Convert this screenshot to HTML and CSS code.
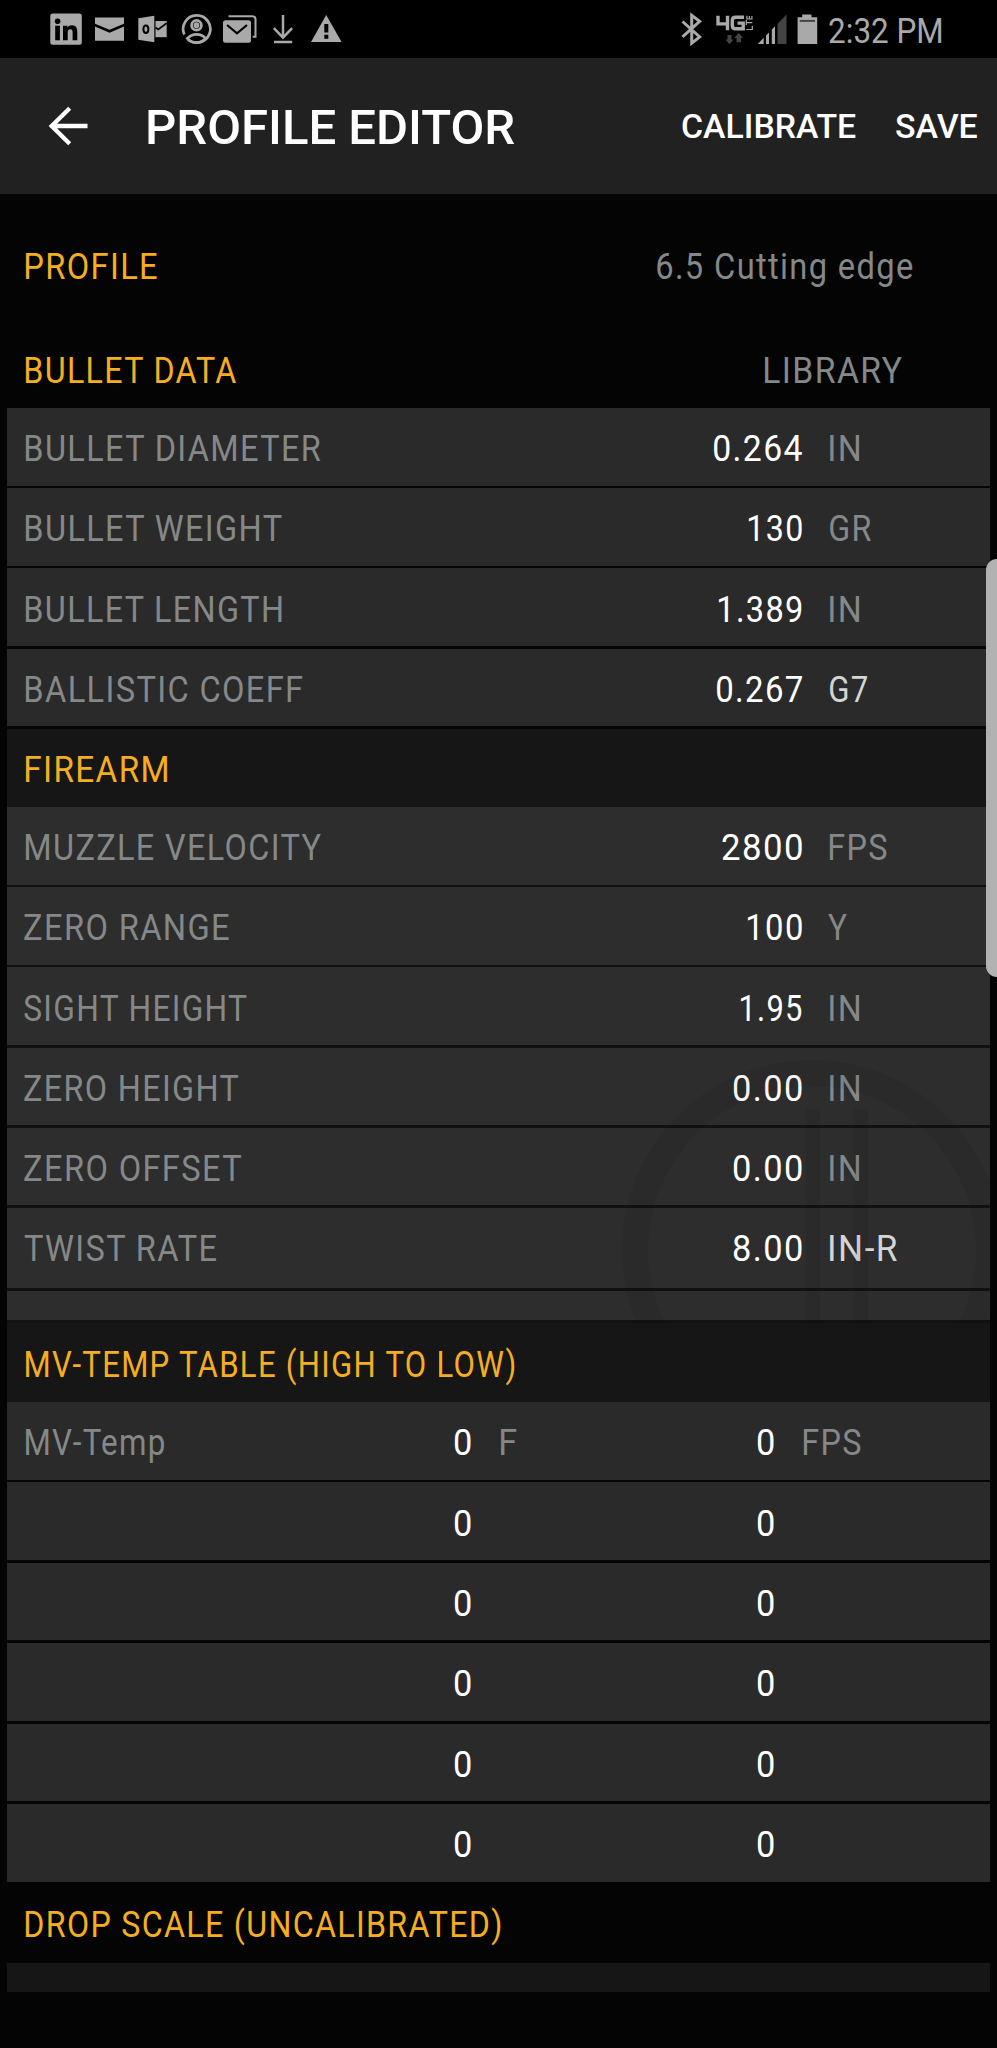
FILE: index.html
```html
<!DOCTYPE html>
<html lang="en">
<head>
<meta charset="utf-8">
<title>Profile Editor</title>
<link rel="stylesheet" href="styles.css">
</head>
<body>
<div class="statusbar">
  <div class="status-left">
    <svg class="ic" width="32" height="58" viewBox="50 0 32 58"><rect x="50.3" y="13.6" width="31.5" height="31.2" rx="2.5" fill="#a9a9a9"/><g fill="#000"><circle cx="57.6" cy="21.3" r="2.8"/><rect x="55.2" y="25.7" width="4.7" height="14.6"/><path d="M63 25.7h4.4v2c1-1.6 2.700-2.400 4.500-2.400 4.300 0 5.400 2.900 5.400 6.800v8.200h-4.700v-7.300c0-2-.2-3.700-2.300-3.700s-2.600 1.600-2.600 3.600v7.400H63z"/></g></svg>
    <svg class="ic g13" width="29" height="58" viewBox="95 0 29 58"><path d="M95 17.600h29v6.100l-14.500 6-14.500-6zM95 26.600l14.500 6.100 14.500-6.100V40.800H95z" fill="#a9a9a9"/></svg>
    <svg class="ic g14" width="29" height="58" viewBox="138 0 29 58"><path d="M138.300 18.300l16-2.500v26.400l-16-2.500z" fill="#a9a9a9"/><ellipse cx="145.900" cy="29.200" rx="2.500" ry="3.800" fill="none" stroke="#000" stroke-width="2"/><path d="M155.500 21h11.200v16.200h-11.200z" fill="#a9a9a9"/><path d="M155.500 27.500l2.700 2 8.500-6.300" fill="none" stroke="#000" stroke-width="1.700"/></svg>
    <svg class="ic g14" width="31" height="58" viewBox="181 0 31 58" fill="none" stroke="#a9a9a9" stroke-width="2.700"><path d="M184.300 34.500A13.600 13.600 0 1 1 187.500 39"/><circle cx="196.500" cy="25.300" r="4.900"/><circle cx="196.500" cy="25.300" r="1.600"/><path d="M187.300 38.500c3-3.500 6-4.200 9.200-4.200s6.500.7 9.300 4.200c-2.500 2.600-5.600 4.100-9.300 4.100s-7-1.500-9.200-4.100z"/></svg>
    <svg class="ic g11" width="34" height="58" viewBox="223 0 34 58"><path d="M228.500 16.300h24q3 0 3 3v17.500h-2.800" fill="none" stroke="#a9a9a9" stroke-width="2"/><rect x="223" y="20.300" width="28" height="22.500" rx="2.500" fill="#a9a9a9"/><path d="M227 25l10 8.300 10-8.300" fill="none" stroke="#000" stroke-width="2.200"/></svg>
    <svg class="ic g16" width="20" height="58" viewBox="273 0 20 58" fill="none" stroke="#a9a9a9" stroke-width="2.500"><path d="M283 15v22M273.900 28.200l9.100 9.400 9.100-9.400M274 42h18.200"/></svg>
    <svg class="ic g18" width="31" height="58" viewBox="311 0 31 58"><path d="M326.200 15L341.600 42H311z" fill="#a9a9a9"/><path d="M326.300 24v8.500M326.300 34.800v3.900" stroke="#000" stroke-width="4"/></svg>
  </div>
  <div class="status-right">
    <svg class="ic" width="21" height="58" viewBox="681 0 21 58"><path d="M682.500 21.500l17.200 15.400-8 6.200V15.200l8 6.200-17.200 15.400" fill="none" stroke="#a9a9a9" stroke-width="3"/></svg>
    <svg class="ic g14" width="37" height="58" viewBox="716 0 37 58"><path d="M718 15.800v8.100h11M727.500 15.800v14.500M744 17.200h-8.500q-3.200 0-3.200 3.200v5q0 3.300 3.200 3.300h7.700v-5.600h-5.700" fill="none" stroke="#a9a9a9" stroke-width="3.400"/><g fill="none" stroke="#a9a9a9" stroke-width="1.200"><path d="M746.300 29.500h6v-3.800M746.300 22.700h6M746.300 20v5M746.900 17.600V15.800M746.900 16v3h5V16M749.400 16v2.500"/></g><path d="M727.500 35h4v4.500h2l-4 4.800-4-4.800h2zM736.500 42.300h4.500V38h2.200l-4.500-5-4.500 5h2.300z" fill="#444"/></svg>
    <svg class="ic g5" width="29" height="58" viewBox="758 0 29 58"><path d="M786.500 14.500V44h-9V24z" fill="#444"/><path d="M757.700 44l6-6.200V44zM766 35.500l3-3V44h-3zM771.800 29.500l3.200-3.300V44h-3.200z" fill="#a9a9a9"/></svg>
    <svg class="ic g10" width="21" height="58" viewBox="797 0 21 58"><path d="M797.600 17.300h4.600V14.600h9.300v2.700h5.700V44h-19.600z" fill="#a9a9a9"/><path d="M799.700 20.900h15.300" stroke="#444" stroke-width="2"/></svg>
    <span class="t clock" data-w="113">2:32 PM</span>
  </div>
</div>
<header class="appbar">
  <svg class="back" width="40" height="40" viewBox="48 106 40 40" fill="none" stroke="#fff" stroke-width="4.300"><path d="M87.500 126H52M69.700 108.300L51.700 126l18 17.700"/></svg>
  <span class="t title" data-w="367">PROFILE EDITOR</span>
  <span class="t action" data-w="174">CALIBRATE</span>
  <span class="t action save" data-w="81.5">SAVE</span>
</header>
<main class="sheet">
  <div class="profile"><span class="t gold" data-w="131">PROFILE</span><span class="t grey name" data-w="256">6.5 Cutting edge</span></div>
  <div class="library"><span class="t gold" data-w="211">BULLET DATA</span><span class="t grey" data-w="137">LIBRARY</span></div>
  <section class="group">
    <div class="row"><span class="t grey" data-w="295">BULLET DIAMETER</span><span class="t val" data-w="88">0.264</span><span class="t grey" data-w="29">IN</span></div>
    <div class="row"><span class="t grey" data-w="256">BULLET WEIGHT</span><span class="t val" data-w="53">130</span><span class="t grey" data-w="41">GR</span></div>
    <div class="row"><span class="t grey" data-w="256">BULLET LENGTH</span><span class="t val" data-w="83">1.389</span><span class="t grey" data-w="29">IN</span></div>
    <div class="row"><span class="t grey" data-w="277">BALLISTIC COEFF</span><span class="t val" data-w="85">0.267</span><span class="t light" data-w="37">G7</span></div>
    <div class="row head"><span class="t gold" data-w="141">FIREARM</span></div>
  </section>
  <section class="group firearm">
    <svg class="mark" width="368" height="264" viewBox="622 1058 368 264" fill="none" stroke="#000"><circle cx="812" cy="1248" r="177" stroke-width="26"/><path d="M813 1107v215M861 1107v215" stroke-width="14"/></svg>
    <div class="row"><span class="t grey" data-w="295">MUZZLE VELOCITY</span><span class="t val" data-w="80">2800</span><span class="t grey" data-w="57">FPS</span></div>
    <div class="row"><span class="t grey out" data-w="205">ZERO RANGE</span><span class="t val" data-w="54">100</span><span class="t grey out" data-w="19">Y</span></div>
    <div class="row"><span class="t grey out" data-w="223">SIGHT HEIGHT</span><span class="t val" data-w="61">1.95</span><span class="t grey" data-w="29">IN</span></div>
    <div class="row"><span class="t grey out" data-w="214">ZERO HEIGHT</span><span class="t val" data-w="68">0.00</span><span class="t grey" data-w="29">IN</span></div>
    <div class="row"><span class="t grey out" data-w="217">ZERO OFFSET</span><span class="t val" data-w="68">0.00</span><span class="t grey" data-w="29">IN</span></div>
    <div class="row twist"><span class="t grey out" data-w="193">TWIST RATE</span><span class="t val" data-w="68">8.00</span><span class="t light" data-w="67">IN-R</span></div>
    <div class="strip"></div>
    <div class="row head"><span class="t gold" data-w="490">MV-TEMP TABLE (HIGH TO LOW)</span></div>
  </section>
  <section class="group temps">
    <div class="row"><span class="t grey" data-w="138">MV-Temp</span><span class="t val" data-w="16">0</span><span class="t grey" data-w="16">F</span><span class="t val" data-w="16">0</span><span class="t grey" data-w="57">FPS</span></div>
    <div class="row"><i></i><span class="t val" data-w="16">0</span><i></i><span class="t val" data-w="16">0</span></div>
    <div class="row"><i></i><span class="t val" data-w="16">0</span><i></i><span class="t val" data-w="16">0</span></div>
    <div class="row"><i></i><span class="t val" data-w="16">0</span><i></i><span class="t val" data-w="16">0</span></div>
    <div class="row"><i></i><span class="t val" data-w="16">0</span><i></i><span class="t val" data-w="16">0</span></div>
    <div class="row"><i></i><span class="t val" data-w="16">0</span><i></i><span class="t val" data-w="16">0</span></div>
  </section>
  <div class="drop"><span class="t gold" data-w="475">DROP SCALE (UNCALIBRATED)</span></div>
  <div class="tail"></div>
</main>
<div class="thumb"></div>
<script src="fit.js"></script>
</body>
</html>
```
FILE: styles.css
```css
* { box-sizing: border-box; }
body {
  position: relative;
  margin: 0;
  width: 997px;
  height: 2048px;
  overflow: hidden;
  background: #040404;
  color: #fff;
  font: 400 36.5px/44px Roboto, sans-serif;
  letter-spacing: 1.5px;
}
svg { display: block; flex: none; }
.t { display: block; white-space: pre; flex: none; }
.t b { display: inline-block; font-weight: inherit; transform-origin: 0 50%; }
.gold { color: #f5ae20; }
.grey { color: #858888; }
.light { color: #d4d4d4; }
.val { color: #fff; justify-self: end; }

.statusbar { display: flex; justify-content: space-between; height: 58px; padding: 0 55px 0 50px; background: #000; }
.status-left, .status-right { display: flex; }
.g5 { margin-left: 5px; }
.g10 { margin-left: 10px; }
.g11 { margin-left: 11px; }
.g13 { margin-left: 13px; }
.g14 { margin-left: 14px; }
.g16 { margin-left: 16px; }
.g18 { margin-left: 18px; }
.clock { margin-left: 11px; padding-top: 9px; font-size: 35.5px; letter-spacing: 0; color: #a9a9a9; }

.appbar { display: flex; align-items: center; height: 136px; padding: 0 20px 0 48px; background: #212121; letter-spacing: 0; font-weight: 500; }
.title { margin-left: 60px; margin-right: auto; padding-top: 3px; font-size: 48px; }
.action { font-size: 34px; }
.save { margin-left: 40px; }

.sheet { padding: 32px 7px 0; }
.profile, .library { display: flex; justify-content: space-between; padding: 19px 88px 0 19px; }
.profile { height: 105px; padding-right: 77px; }
.library { height: 77px; padding-top: 18px; }

.group { position: relative; display: flex; flex-direction: column; gap: 2.7px; background: #050505; }
.row { display: grid; grid-template-columns: 1fr 100px 160px; column-gap: 28px; align-items: center; height: 77.5px; padding: 5px 0 0 19px; background: #2a2a2a; }
.row .out { margin-left: -2px; }
.head { height: 78.3px; background: #161616; }
.firearm { background: #111; }
.firearm .row, .strip { background: #2d2d2d; }
.firearm .head { height: 78.8px; background: #161616; }
.firearm .twist { height: 80.3px; padding-bottom: 3px; }
.strip { height: 29.5px; }
.mark { position: absolute; right: 0; top: 253px; z-index: 1; opacity: .045; pointer-events: none; }
.temps { gap: 2.8px; }
.temps .row { grid-template-columns: 281px 164px 120px 183px 1fr; column-gap: 0; height: 77.6px; }
.temps .val + .grey { margin-left: 30px; }
.drop { height: 81px; padding: 21px 0 0 19px; }
.tail { height: 29.5px; background: #161616; }

.thumb { position: absolute; right: 0; top: 559px; width: 11px; height: 418px; border-radius: 11px 0 0 11px; background: #b2b2b2; }
```
FILE: fit.js
```js
// Sizes each label to the ink width given in data-w, so columns line up on the glyph edges.
const ctx = document.createElement('canvas').getContext('2d');
document.querySelectorAll('.t').forEach(el => {
  const cs = getComputedStyle(el);
  ctx.font = `${cs.fontWeight} ${cs.fontSize} Roboto, sans-serif`;
  ctx.letterSpacing = cs.letterSpacing === 'normal' ? '0px' : cs.letterSpacing;
  const m = ctx.measureText(el.textContent);
  const left = -m.actualBoundingBoxLeft;
  const ink = m.actualBoundingBoxRight - left;
  const width = Number(el.dataset.w);
  const scale = width / ink;
  const inner = document.createElement('b');
  inner.textContent = el.textContent;
  inner.style.transform = `translateX(${-left * scale}px) scaleX(${scale})`;
  el.textContent = '';
  el.append(inner);
  el.style.width = `${width}px`;
});
```
